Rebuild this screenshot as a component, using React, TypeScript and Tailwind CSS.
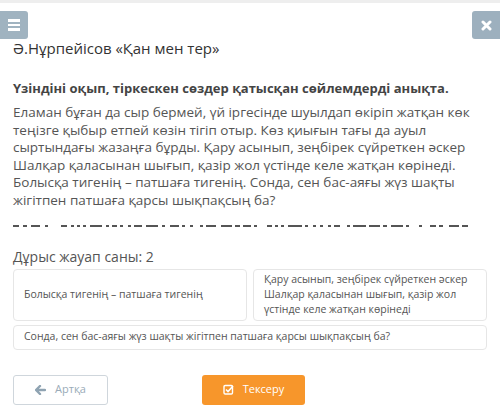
import React from "react";

const dashes: Array<[number, number]> = [
  [4, 2], [3, 2], [6, 3], [2, 8], [4, 2], [2, 2], [2, 2], [2, 2], [8, 2], [2, 2], [3, 2], [2, 3], [2, 2], [5, 2], [8, 2], [2, 3],
  [6, 2], [2, 3], [2, 4], [2, 2], [6, 3], [7, 2], [3, 2], [5, 2], [2, 6], [3, 2], [2, 2], [2, 2], [9, 2], [2, 3],
  [2, 2], [2, 3], [2, 2], [4, 4], [2, 2], [8, 2], [7, 2], [2, 3], [7, 2], [2, 6], [2, 5], [4, 2], [2, 4], [6, 2], [4, 0],
];

export default function App() {
  return (
    <div
      className="w-[500px] h-[415px] bg-white overflow-hidden text-[#444]"
      style={{ fontFamily: '"Open Sans", "Noto Sans", sans-serif' }}
    >
      <div className="h-[3px] bg-[#eeeeee]" />
      <div className="mt-[8px] flex justify-between h-[28px]">
        <div className="w-[28px] h-[28px] bg-[#a0b3c0] rounded-r-[3px] flex flex-col items-center justify-center gap-[2px]">
          <span className="block w-[12px] h-[2.5px] bg-white" />
          <span className="block w-[12px] h-[2.5px] bg-white" />
          <span className="block w-[12px] h-[2.5px] bg-white" />
        </div>
        <div className="w-[28px] h-[28px] bg-[#9db0be] rounded-l-[3px] flex items-center justify-center">
          <svg width="11" height="11" viewBox="0 0 11 11">
            <path d="M2 2 L9 9 M9 2 L2 9" stroke="white" strokeWidth="3" strokeLinecap="round" />
          </svg>
        </div>
      </div>
      <div className="px-[13px]">
        <div className="text-[15px] leading-[20px] text-[#333] mt-[-1px]">Ә.Нұрпейісов «Қан мен тер»</div>
        <div className="mt-[21px] text-[13px] leading-[18px] font-bold text-[#444]">
          Үзіндіні оқып, тіркескен сөздер қатысқан сөйлемдерді анықта.
        </div>
        <div className="mt-[7px] text-[13.5px] leading-[17.6px] text-[#555]">
          Еламан бұған да сыр бермей, үй іргесінде шуылдап өкіріп жатқан көк
          <br />
          теңізге қыбыр етпей көзін тігіп отыр. Көз қиығын тағы да ауыл
          <br />
          сыртындағы жазаңға бұрды. Қару асынып, зеңбірек сүйреткен әскер
          <br />
          Шалқар қаласынан шығып, қазір жол үстінде келе жатқан көрінеді.
          <br />
          Болысқа тигенің – патшаға тигенің. Сонда, сен бас-аяғы жүз шақты
          <br />
          жігітпен патшаға қарсы шықпақсың ба?
        </div>
        <div className="mt-[15px] flex h-[2px] overflow-hidden">
          {dashes.map(([w, g], i) => (
            <span
              key={i}
              className="block h-[2px] bg-[#555] shrink-0"
              style={{ width: w * 1.6, marginRight: g * 1.6 }}
            />
          ))}
        </div>
        <div className="mt-[21px] text-[14px] leading-[18px] text-[#555]">Дұрыс жауап саны: 2</div>
        <div className="mt-[3px] grid grid-cols-2 gap-[6px]">
          <div className="h-[52px] border border-[#e6e6e6] rounded-[4px] px-[10px] flex items-center text-[10.5px] text-[#555]">
            Болысқа тигенің – патшаға тигенің
          </div>
          <div className="h-[52px] border border-[#e6e6e6] rounded-[4px] px-[10px] flex items-center text-[10.5px] leading-[15px] text-[#555]">
            <div>
              Қару асынып, зеңбірек сүйреткен әскер
              <br />
              Шалқар қаласынан шығып, қазір жол
              <br />
              үстінде келе жатқан көрінеді
            </div>
          </div>
        </div>
        <div className="mt-[4px] h-[25px] border border-[#e6e6e6] rounded-[4px] px-[10px] flex items-center text-[10.5px] text-[#555]">
          Сонда, сен бас-аяғы жүз шақты жігітпен патшаға қарсы шықпақсың ба?
        </div>
        <div className="mt-[25px] flex items-center">
          <div className="w-[95px] h-[30px] border border-[#cfd6dc] rounded-[3px] flex items-center justify-center gap-[9px] text-[11px] text-[#9aabb8]">
            <svg width="11" height="10" viewBox="0 0 11 10">
              <path d="M5 1 L1 5 L5 9 M1.5 5 H10" stroke="#8fa3b2" strokeWidth="2.4" fill="none" strokeLinecap="round" strokeLinejoin="round" />
            </svg>
            <span>Артқа</span>
          </div>
          <div className="ml-[94px] w-[103px] h-[30px] bg-[#f7962b] rounded-[3px] flex items-center justify-center gap-[9px] text-[11px] text-white">
            <svg width="11" height="11" viewBox="0 0 11 11">
              <rect x="1" y="1.5" width="8.5" height="8.5" rx="1.2" stroke="white" strokeWidth="1.4" fill="none" />
              <path d="M3 5.5 L5 7.5 L10 2" stroke="white" strokeWidth="1.6" fill="none" />
            </svg>
            <span>Тексеру</span>
          </div>
        </div>
      </div>
    </div>
  );
}
